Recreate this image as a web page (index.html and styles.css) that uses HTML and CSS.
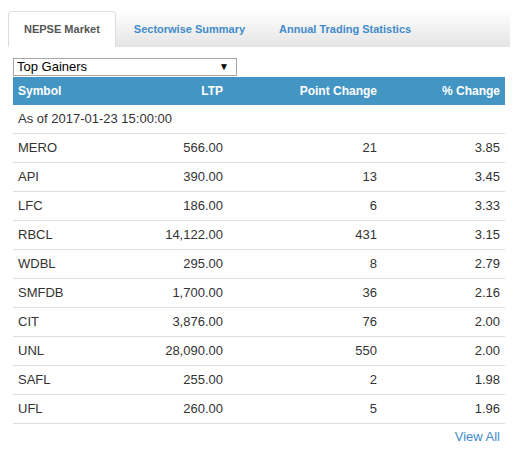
FILE: index.html
```html
<!DOCTYPE html>
<html lang="en">
<head>
    <meta charset="UTF-8">
    <title>NEPSE Market</title>
    <link rel="stylesheet" href="styles.css">
</head>
<body>

    <div class="tabs">
        <a class="tab active" href="#">NEPSE Market</a>
        <a class="tab" href="#">Sectorwise Summary</a>
        <a class="tab" href="#">Annual Trading Statistics</a>
    </div>

    <div class="panel">
        <div class="picker">
            <select>
                <option>Top Gainers</option>
                <option>Top Losers</option>
                <option>Top Turnover</option>
            </select>
        </div>

        <table class="market">
            <colgroup>
                <col style="width:107px">
                <col style="width:108px">
                <col style="width:154px">
                <col style="width:123px">
            </colgroup>
            <thead>
                <tr>
                    <th class="left">Symbol</th>
                    <th>LTP</th>
                    <th>Point Change</th>
                    <th>% Change</th>
                </tr>
            </thead>
            <tbody>
                <tr><td colspan="4" class="left">As of 2017-01-23 15:00:00</td></tr>
                <tr><td class="left">MERO</td><td>566.00</td><td>21</td><td>3.85</td></tr>
                <tr><td class="left">API</td><td>390.00</td><td>13</td><td>3.45</td></tr>
                <tr><td class="left">LFC</td><td>186.00</td><td>6</td><td>3.33</td></tr>
                <tr><td class="left">RBCL</td><td>14,122.00</td><td>431</td><td>3.15</td></tr>
                <tr><td class="left">WDBL</td><td>295.00</td><td>8</td><td>2.79</td></tr>
                <tr><td class="left">SMFDB</td><td>1,700.00</td><td>36</td><td>2.16</td></tr>
                <tr><td class="left">CIT</td><td>3,876.00</td><td>76</td><td>2.00</td></tr>
                <tr><td class="left">UNL</td><td>28,090.00</td><td>550</td><td>2.00</td></tr>
                <tr><td class="left">SAFL</td><td>255.00</td><td>2</td><td>1.98</td></tr>
                <tr><td class="left">UFL</td><td>260.00</td><td>5</td><td>1.96</td></tr>
            </tbody>
        </table>

        <div class="more"><a href="#">View All</a></div>
    </div>

</body>
</html>
```

FILE: styles.css
```css
body {
    margin: 11px 8px 8px 8px;
    font-family: "Liberation Sans", Arial, sans-serif;
    font-size: 13px;
    color: #333;
    background: #fff;
}
a {
    color: #428bca;
    text-decoration: none;
}
.tabs {
    display: flex;
    width: 502px;
    background: linear-gradient(#ffffff, #e4e4e4);
}
.tab {
    display: block;
    padding: 10px 15px;
    margin-right: 2px;
    border: 1px solid transparent;
    border-radius: 4px 4px 0 0;
    font-size: 11px;
    font-weight: bold;
    line-height: 14px;
}
.tab.active {
    background: #fff;
    color: #555;
    border-color: #ddd #ddd transparent #ddd;
}
.panel {
    padding: 11px 5px 0 5px;
    width: 492px;
}
.picker {
    position: relative;
    width: 224px;
    margin-bottom: 1px;
}
.picker select {
    appearance: none;
    -webkit-appearance: none;
    display: block;
    width: 224px;
    height: 18px;
    margin: 0;
    padding: 0 0 0 3px;
    border: 1px solid #a6a6a6;
    border-radius: 0;
    background: #fff;
    font-family: "Liberation Sans", Arial, sans-serif;
    font-size: 13px;
    line-height: 16px;
    color: #000;
}
.picker::after {
    content: "\25BC";
    position: absolute;
    right: 8px;
    top: 3px;
    font-size: 10px;
    color: #000;
    pointer-events: none;
}
.market {
    width: 492px;
    border-collapse: collapse;
    table-layout: fixed;
}
.market th {
    background: #4396c4;
    color: #fff;
    font-size: 12px;
    font-weight: bold;
    text-align: right;
    padding: 4px 5px;
    line-height: 20px;
}
.market td {
    text-align: right;
    padding: 4px 5px;
    line-height: 20px;
    border-bottom: 1px solid #ddd;
}
.market .left {
    text-align: left;
}
.more {
    text-align: right;
    padding: 6px 5px 0 0;
    line-height: 14px;
}
```
